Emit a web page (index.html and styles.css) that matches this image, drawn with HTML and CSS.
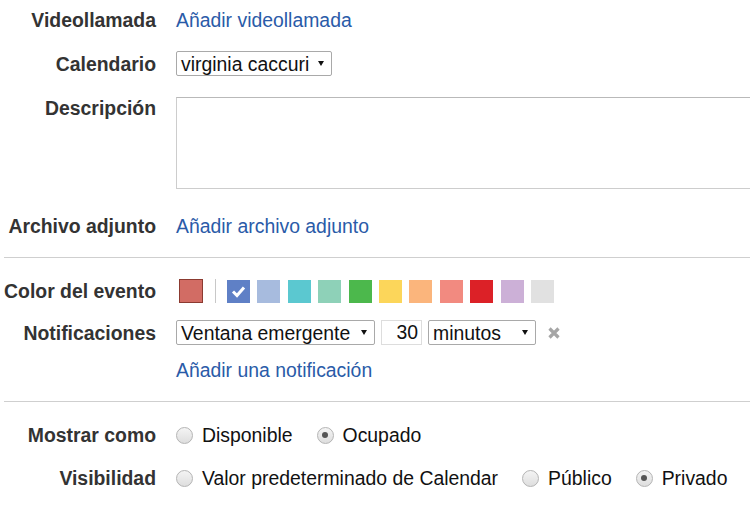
FILE: index.html
```html
<!DOCTYPE html>
<html lang="es">
<head>
    <meta charset="UTF-8">
    <title>Detalles del evento</title>
    <link rel="stylesheet" href="styles.css">
</head>
<body>
    <div class="form">
        <div class="row row-video">
            <div class="label">Videollamada</div>
            <div class="value"><a class="link" href="#">Añadir videollamada</a></div>
        </div>

        <div class="row row-cal">
            <div class="label">Calendario</div>
            <div class="value">
                <div class="select select-cal"><span>virginia caccuri</span><i class="arrow"></i></div>
            </div>
        </div>

        <div class="row row-desc">
            <div class="label">Descripción</div>
            <div class="value"><div class="textarea"></div></div>
        </div>

        <div class="row row-attach">
            <div class="label">Archivo adjunto</div>
            <div class="value"><a class="link" href="#">Añadir archivo adjunto</a></div>
        </div>

        <div class="sep sep-1"></div>

        <div class="row row-color">
            <div class="label">Color del evento</div>
            <div class="value swatches">
                <span class="swatch swatch-cal"></span>
                <span class="divider"></span>
                <span class="swatch selected" style="background:#5f80c6">
                    <svg width="23" height="23" viewBox="0 0 23 23"><path d="M6 11.5 L10 15.5 L17 7.5" fill="none" stroke="#fff" stroke-width="3"/></svg>
                </span>
                <span class="swatch" style="background:#a7bbde"></span>
                <span class="swatch" style="background:#5bc8d0"></span>
                <span class="swatch" style="background:#8ed1b8"></span>
                <span class="swatch" style="background:#4cb84c"></span>
                <span class="swatch" style="background:#fcd65a"></span>
                <span class="swatch" style="background:#fbb57c"></span>
                <span class="swatch" style="background:#f28a80"></span>
                <span class="swatch" style="background:#dc2127"></span>
                <span class="swatch" style="background:#ccb0d7"></span>
                <span class="swatch" style="background:#e1e1e1"></span>
            </div>
        </div>

        <div class="row row-notif">
            <div class="label">Notificaciones</div>
            <div class="value notif">
                <div class="select select-type"><span>Ventana emergente</span><i class="arrow"></i></div>
                <div class="num">30</div>
                <div class="select select-unit"><span>minutos</span><i class="arrow"></i></div>
                <svg class="remove" width="12" height="12" viewBox="0 0 12 12"><path d="M1.5 1.5 L10.5 10.5 M10.5 1.5 L1.5 10.5" stroke="#a6a6a6" stroke-width="3.2"/></svg>
            </div>
        </div>

        <div class="row row-addnotif">
            <div class="label"></div>
            <div class="value"><a class="link" href="#">Añadir una notificación</a></div>
        </div>

        <div class="sep sep-2"></div>

        <div class="row row-show">
            <div class="label">Mostrar como</div>
            <div class="value radios">
                <span class="opt"><i class="radio"></i>Disponible</span>
                <span class="opt"><i class="radio checked"></i>Ocupado</span>
            </div>
        </div>

        <div class="row row-vis">
            <div class="label">Visibilidad</div>
            <div class="value radios">
                <span class="opt"><i class="radio"></i>Valor predeterminado de Calendar</span>
                <span class="opt"><i class="radio"></i>Público</span>
                <span class="opt"><i class="radio checked"></i>Privado</span>
            </div>
        </div>
    </div>
</body>
</html>
```

FILE: styles.css
```css
html, body { margin: 0; padding: 0; background: #fff; overflow: hidden; }
body { font-family: "Liberation Sans", Arial, sans-serif; font-size: 19.4px; color: #222; }
.form { padding: 8px 0 0 4px; width: 746px; }

.row { display: grid; grid-template-columns: 152px 1fr; column-gap: 20px; align-items: center; line-height: 24px; }
.label { text-align: right; font-weight: bold; color: #333; }
.value { display: flex; align-items: center; min-width: 0; }
.link { color: #2a5ba8; text-decoration: none; }

.row-cal { margin-top: 19px; }
.row-desc { margin-top: 21px; align-items: start; }
.row-desc .label { margin-top: -1px; }
.row-attach { margin-top: 25px; }
.row-color { margin-top: 21px; }
.row-notif { margin-top: 17px; }
.row-addnotif { margin-top: 13px; }
.row-show { margin-top: 21px; }
.row-vis { margin-top: 19px; }

.sep { height: 1px; background: #cfcfcf; }
.sep-1 { margin-top: 19px; }
.sep-2 { margin-top: 19px; }

.select { box-sizing: border-box; height: 25px; border: 1px solid #a9a9a9; border-radius: 2px; display: flex; align-items: center; justify-content: space-between; padding: 0 7px 0 4px; line-height: 22px; background: #fff; color: #111; flex: none; }
.arrow { width: 0; height: 0; border-left: 3px solid transparent; border-right: 3px solid transparent; border-top: 5px solid #111; }
.select-cal { width: 156px; }
.select-type { width: 199px; }
.select-unit { width: 108px; }

.textarea { box-sizing: border-box; width: 574px; height: 92px; flex: none; border: 1px solid #cdcdcd; border-top-color: #b9b9b9; border-right: none; }

.swatches { height: 24px; }
.swatch { display: block; width: 23px; height: 23px; margin-right: 7.4px; flex: none; }
.swatch svg { display: block; }
.swatch-cal { box-sizing: border-box; width: 24px; height: 24px; margin-left: 3px; margin-right: 12px; background: #d26c64; border: 1px solid #8b3a30; }
.divider { display: block; width: 1px; height: 24px; background: #c8c8c8; margin-right: 11px; flex: none; }

.notif { gap: 6px; }
.num { box-sizing: border-box; width: 41px; height: 25px; border: 1px solid #ddd; text-align: right; padding-right: 3px; line-height: 23px; color: #111; flex: none; }
.remove { margin-left: 6px; flex: none; }

.radios { gap: 24px; color: #111; }
.opt { display: flex; align-items: center; white-space: nowrap; }
.radio { box-sizing: border-box; width: 17px; height: 17px; border-radius: 50%; border: 1px solid #b4b4b4; background: linear-gradient(#f4f4f4, #dedede); margin-right: 9px; position: relative; flex: none; }
.radio.checked::after { content: ""; position: absolute; left: 4.5px; top: 4.5px; width: 6px; height: 6px; border-radius: 50%; background: #555; }
```
